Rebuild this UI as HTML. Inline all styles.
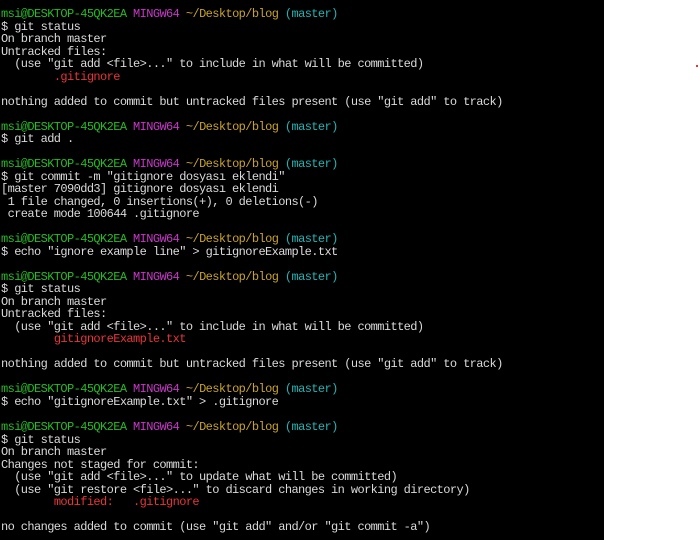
<!DOCTYPE html>
<html><head><meta charset="utf-8"><style>
html,body{margin:0;padding:0;background:#fff;width:700px;height:540px;overflow:hidden}
#t{position:absolute;left:0;top:0;width:604px;height:540px;background:#000;color:#dadada;
font-family:"Liberation Mono","DejaVu Sans Mono",monospace;font-size:12px;letter-spacing:-0.6px;line-height:12.52px;white-space:pre;padding-top:8px;box-sizing:border-box;padding-left:1px}
.g{color:#25bc24}.m{color:#c838c8}.y{color:#c7a32a}.c{color:#1fb5b5}.r{color:#e8343a}
#dot{position:absolute;left:696px;top:65px;width:2px;height:2px;background:#e33}
</style></head><body><div id="t"><span class="g">msi@DESKTOP-45QK2EA</span> <span class="m">MINGW64</span> <span class="y">~/Desktop/blog</span> <span class="c">(master)</span>
$ git status
On branch master
Untracked files:
  (use "git add &lt;file&gt;..." to include in what will be committed)
        <span class="r">.gitignore</span>

nothing added to commit but untracked files present (use "git add" to track)

<span class="g">msi@DESKTOP-45QK2EA</span> <span class="m">MINGW64</span> <span class="y">~/Desktop/blog</span> <span class="c">(master)</span>
$ git add .

<span class="g">msi@DESKTOP-45QK2EA</span> <span class="m">MINGW64</span> <span class="y">~/Desktop/blog</span> <span class="c">(master)</span>
$ git commit -m "gitignore dosyası eklendi"
[master 7090dd3] gitignore dosyası eklendi
 1 file changed, 0 insertions(+), 0 deletions(-)
 create mode 100644 .gitignore

<span class="g">msi@DESKTOP-45QK2EA</span> <span class="m">MINGW64</span> <span class="y">~/Desktop/blog</span> <span class="c">(master)</span>
$ echo "ignore example line" &gt; gitignoreExample.txt

<span class="g">msi@DESKTOP-45QK2EA</span> <span class="m">MINGW64</span> <span class="y">~/Desktop/blog</span> <span class="c">(master)</span>
$ git status
On branch master
Untracked files:
  (use "git add &lt;file&gt;..." to include in what will be committed)
        <span class="r">gitignoreExample.txt</span>

nothing added to commit but untracked files present (use "git add" to track)

<span class="g">msi@DESKTOP-45QK2EA</span> <span class="m">MINGW64</span> <span class="y">~/Desktop/blog</span> <span class="c">(master)</span>
$ echo "gitignoreExample.txt" &gt; .gitignore

<span class="g">msi@DESKTOP-45QK2EA</span> <span class="m">MINGW64</span> <span class="y">~/Desktop/blog</span> <span class="c">(master)</span>
$ git status
On branch master
Changes not staged for commit:
  (use "git add &lt;file&gt;..." to update what will be committed)
  (use "git restore &lt;file&gt;..." to discard changes in working directory)
        <span class="r">modified:   .gitignore</span>

no changes added to commit (use "git add" and/or "git commit -a")</div><div id="dot"></div></body></html>
